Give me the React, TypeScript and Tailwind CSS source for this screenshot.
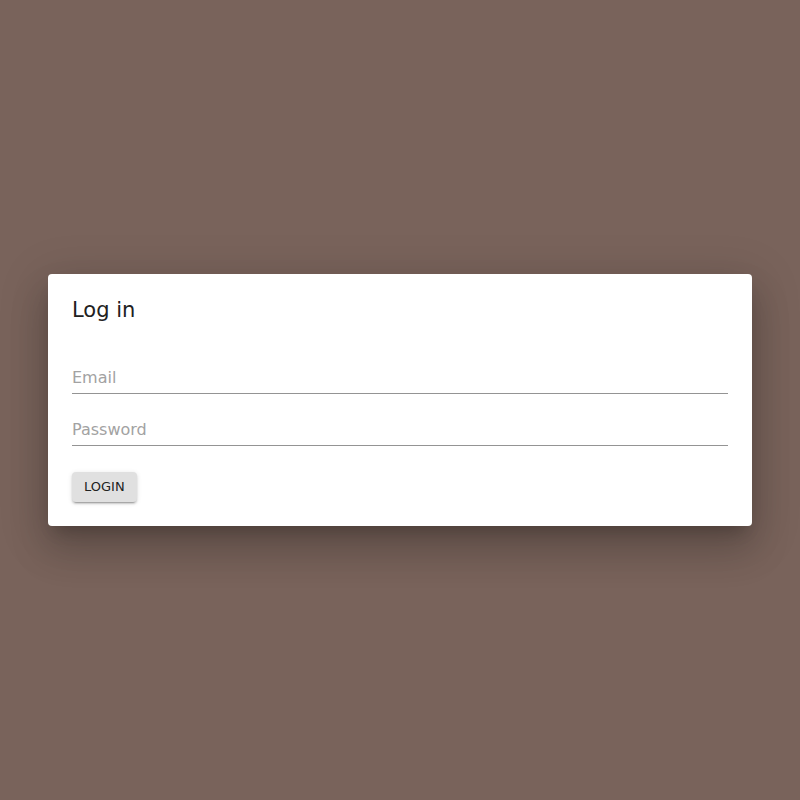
import React from "react";

export default function App() {
  return (
    <div
      className="w-[800px] h-[800px] bg-[#79635b] flex items-center justify-center"
      style={{ fontFamily: '"DejaVu Sans", sans-serif' }}
    >
      <div className="w-[704px] bg-white rounded-[4px] shadow-[0_11px_15px_-7px_rgba(0,0,0,0.2),0_24px_38px_3px_rgba(0,0,0,0.14),0_9px_46px_8px_rgba(0,0,0,0.12)] flex flex-col">
        <div className="px-6 pt-6 pb-5 text-[21px] leading-[24px] text-[#212121]">Log in</div>
        <div className="px-6 pb-6 flex flex-col">
          <div className="mt-[19px] border-b border-[#949494] pt-[7px] pb-[5px]">
            <div className="text-[16px] leading-[20px] text-[#a2a2a2]">Email</div>
          </div>
          <div className="mt-[19px] border-b border-[#949494] pt-[7px] pb-[5px]">
            <div className="text-[16px] leading-[20px] text-[#a2a2a2]">Password</div>
          </div>
          <div className="mt-[26px]">
            <button className="h-[30px] px-3 bg-[#e0e0e0] rounded-[4px] text-[13px] text-[#222222] shadow-[0_3px_1px_-2px_rgba(0,0,0,0.2),0_2px_2px_0_rgba(0,0,0,0.14),0_1px_5px_0_rgba(0,0,0,0.12)]">
              LOGIN
            </button>
          </div>
        </div>
      </div>
    </div>
  );
}
